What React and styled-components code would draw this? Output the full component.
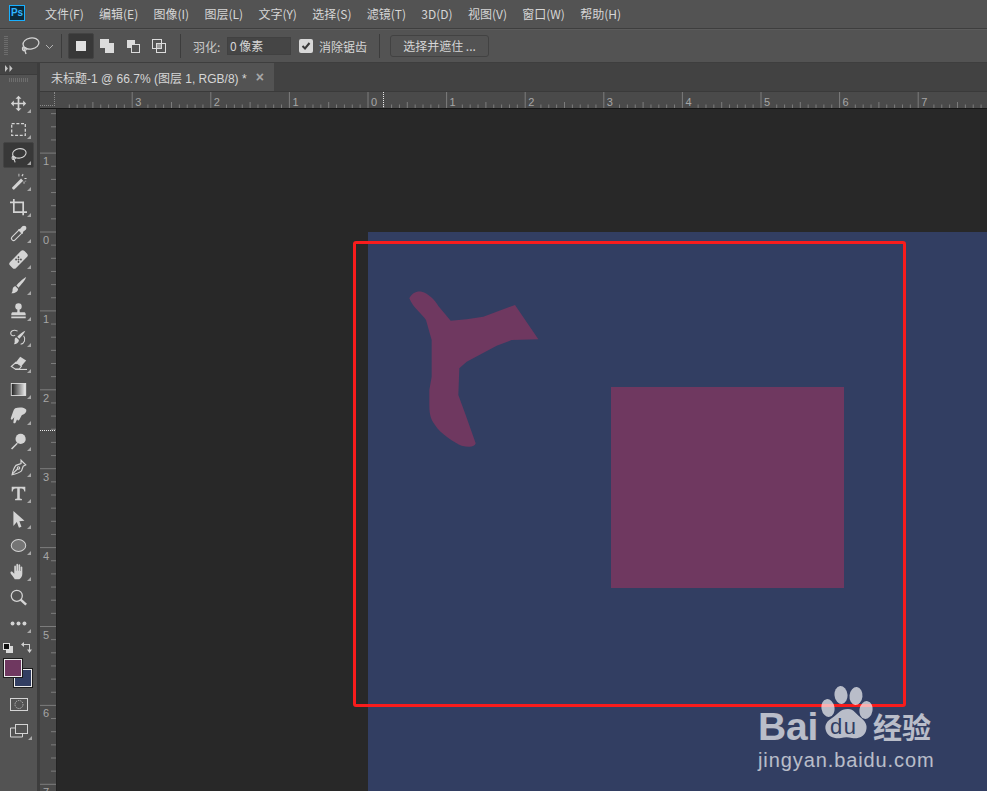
import React from 'react';
import styled, { createGlobalStyle } from 'styled-components';

//Menu and tool data
const MENUS = ['文件(F)', '编辑(E)', '图像(I)', '图层(L)', '文字(Y)', '选择(S)', '滤镜(T)', '3D(D)', '视图(V)', '窗口(W)', '帮助(H)'];
const H_ZERO = 312;
const H_STEP = 78.6;
const V_ZERO = 123;
const V_STEP = 78.9;
const range = (a, b) => Array.from({ length: b - a + 1 }, (_, i) => a + i);

const C = '#d4d4d4';

const ICONS = {
  move: <path fill={C} d="M10 1l3.500 3.500h-2.500v4.500h4.500V6.500L19 10l-3.500 3.500V11H11v4.500h2.500L10 19l-3.500-3.500H9V11H4.500v2.500L1 10l3.500-3.500V9H9V4.500H6.500z" />,
  marquee: <path fill="none" stroke={C} strokeWidth="1.500" strokeDasharray="3.500 2" d="M2 3h16v14H2z" />,
  lasso: (
    <g fill="none" stroke={C} strokeWidth="1.300">
      <ellipse cx="11" cy="7.500" rx="8" ry="5.500" transform="rotate(-10 11 7.500)" />
      <path d="M3.500 10.500c-2 2-1 5 1.500 4s1-3.500-1-2.500c0 2 1.500 3.500 2 6" />
    </g>
  ),
  wand: (
    <g fill={C}>
      <path d="M13 6.500l2.500 2.500L5 19.500c-1 .5-3-1.500-2.500-2.500z" />
      <path d="M10 1h1v3h-1zM15 1l1 1-1.500 2-1-1zM17 6h2.500v1H17zM16 10h1v2.500h-1zM18 9h1v1h-1z" />
    </g>
  ),
  crop: <path fill="none" stroke={C} strokeWidth="2" d="M0 4h15.500v15M4.500 0v15.500H20" />,
  dropper: (
    <g>
      <path fill="none" stroke={C} strokeWidth="1.300" d="M10.500 6l3.500 3.500-8 8c-1 1-2.500 1-3.500 0s-1-2.500 0-3.500z" />
      <path fill={C} d="M9.500 5l2.500-.5 2.500-3c1-1 3-1 4 0s1 3 0 4l-3 2.500-.5 2.500z" />
    </g>
  ),
  heal: (
    <g transform="rotate(-45 10 10)">
      <rect x="-2" y="5" width="24" height="10" rx="3" fill={C} />
      <g fill="#535353">
        <circle cx="8" cy="8" r="1.100" />
        <circle cx="12" cy="8" r="1.100" />
        <circle cx="8" cy="12" r="1.100" />
        <circle cx="12" cy="12" r="1.100" />
        <circle cx="10" cy="10" r="1.100" />
      </g>
    </g>
  ),
  brush: <path fill={C} d="M19 0c-1 4-6 9-9 12.500l-2.500-2.500C10 7 15 2 19 0zM6.500 11l3 3c0 3-4 5.500-8 5 1.500-1 1.500-2.500 1.500-4 0-2 1.500-4 3.500-4z" />,
  stamp: (
    <g fill={C}>
      <circle cx="10" cy="4" r="3.800" />
      <path d="M8.800 7h2.400l.3 4H17c1 0 1.500 1.500 1.500 3.500h-17c0-2 .5-3.500 1.500-3.500h5.500zM1.500 16h17v2h-17z" />
    </g>
  ),
  history: (
    <g>
      <path fill={C} d="M18 2c-1 3-5 7-7 9.500L8.500 9C11 6.500 15 3 18 2zM7.500 10l3 3c0 3-2.500 5-6 5 1-1 1-2.500 1-3.500 0-2.500 0-4.500 2-4.500z" />
      <path fill="none" stroke={C} strokeWidth="1.200" d="M9 2.500C4 0 0 2.500 1 6c.5 2 4 2.500 5 1M16 8c3 4 1 9-3.500 10" />
    </g>
  ),
  eraser: (
    <g>
      <path fill={C} d="M12 2l7 4.500-5.500 6.500-6.500-4.500z" />
      <path fill="none" stroke={C} strokeWidth="1.300" d="M7 8.500l6.500 4.500-2.500 3.500H6l-4.500-3z" />
      <path stroke={C} strokeWidth="1.300" d="M6 17h14" />
    </g>
  ),
  gradient: (
    <g>
      <defs>
        <linearGradient id="toolGrad">
          <stop offset="0" stopColor="#1c1c1c" />
          <stop offset="1" stopColor="#f0f0f0" />
        </linearGradient>
      </defs>
      <rect x="1.500" y="3" width="17" height="14" fill="url(#toolGrad)" stroke="#e6e6e6" />
    </g>
  ),
  smudge: <path fill={C} d="M6 1.500C10 0 17 0 19 3c1 3-2 6-5 6.500L11 15c-1 1.500-3 .5-2.500-1L6.500 18.500c-1 1.500-3 .5-2.500-1L5 12l-2 2.500c-1 1-2.500 0-2-1.500L3.500 6C4 4 5 2.500 6 1.500z" />,
  dodge: (
    <g fill={C}>
      <circle cx="12.500" cy="7" r="6" />
      <path d="M8 11.500l1.200 1.200-6.700 6.800-1.300-1.300z" />
    </g>
  ),
  pen: (
    <g fill="none" stroke={C} strokeWidth="1.400">
      <path d="M13 1.500l5.500 5.500-3 1.500-2 5.500c-3 2.500-6 3.500-11 4.500 1-5 2-8 4.500-11l6-2z" />
      <path d="M3 17.500l6-6" />
      <circle cx="10" cy="10.500" r="1.400" />
    </g>
  ),
  type: <path fill={C} d="M2 2h16v5.500h-1.200C16.500 5 15.500 4 13.500 4H11.500v12l2.500.5V18H6v-1.500l2.500-.5V4H6.500C4.500 4 3.500 5 3.200 7.500H2z" />,
  arrow: <path fill={C} d="M4 0l13 11.500-6 .5 2.500 6.500-3 1.300-2.500-6.800L4 17.500z" />,
  ellipse: <ellipse cx="10" cy="10" rx="8.500" ry="7" fill="#757575" stroke={C} strokeWidth="1.200" />,
  hand: <path fill={C} d="M5.500 19c-1-2.500-5-6-5-7.500s1.500-2 2.500-1l2 2V4c0-1.300 2-1.300 2 0v5h.500V2c0-1.300 2-1.300 2 0v7h.500V2.500c0-1.300 2-1.300 2 0V9.500h.500V5c0-1.300 2-1.300 2 0v7.500c0 3-1.500 5-3.500 6.500z" />,
  zoom: (
    <g fill="none" stroke={C}>
      <circle cx="8" cy="8" r="6.500" strokeWidth="1.500" />
      <path d="M12.500 12.500l6.500 6" strokeWidth="2.800" />
    </g>
  ),
  more: (
    <g fill={C}>
      <circle cx="3" cy="10" r="2.300" />
      <circle cx="10" cy="10" r="2.300" />
      <circle cx="17" cy="10" r="2.300" />
    </g>
  ),
};

const TOOLS = [
  { name: 'move', corner: true },
  { name: 'marquee', corner: true },
  { name: 'lasso', corner: true, active: true },
  { name: 'wand', corner: true },
  { name: 'crop', corner: true },
  { name: 'dropper', corner: true },
  { name: 'heal', corner: true },
  { name: 'brush', corner: true },
  { name: 'stamp', corner: true },
  { name: 'history', corner: true },
  { name: 'eraser', corner: true },
  { name: 'gradient', corner: true },
  { name: 'smudge', corner: true },
  { name: 'dodge', corner: true },
  { name: 'pen', corner: true },
  { name: 'type', corner: true },
  { name: 'arrow', corner: true },
  { name: 'ellipse', corner: true },
  { name: 'hand', corner: true },
  { name: 'zoom', corner: false },
  { name: 'more', corner: true },
];

//Rulers are drawings, ticks come from the scale
function HorizontalRuler() {
  return (
    <RulerSvg width="931" height="16">
      {range(-4, 7).map((n) => {
        const x = H_ZERO + n * H_STEP;
        return (
          <g key={n}>
            <line x1={x} x2={x} y1="0" y2="16" stroke="#7c7c7c" />
            {n > -4 && (
              <text x={x + 3} y="13.500" fontSize="11" fill="#a6a6a6" fontFamily="'Liberation Sans', sans-serif">
                {Math.abs(n)}
              </text>
            )}
            {range(2, 9).map((i) => (
              <line
                key={i}
                x1={x + (i * H_STEP) / 10}
                x2={x + (i * H_STEP) / 10}
                y1={i === 5 ? 10 : 12.500}
                y2="16"
                stroke="#7c7c7c"
              />
            ))}
          </g>
        );
      })}
      <line x1="327.500" x2="327.500" y1="0" y2="16" stroke="#e8e8e8" strokeDasharray="1 1" />
    </RulerSvg>
  );
}

function VerticalRuler() {
  return (
    <RulerSvg width="16" height="682">
      {range(-2, 7).map((n) => {
        const y = V_ZERO + n * V_STEP;
        return (
          <g key={n}>
            <line x1="0" x2="16" y1={y} y2={y} stroke="#7c7c7c" />
            {n > -2 && (
              <text x="3" y={y + 12} fontSize="11" fill="#a6a6a6" fontFamily="'Liberation Sans', sans-serif">
                {Math.abs(n)}
              </text>
            )}
            {range(1, 5).map((i) => (
              <line key={i} x1="11" x2="16" y1={y + (i * V_STEP) / 6} y2={y + (i * V_STEP) / 6} stroke="#7c7c7c" />
            ))}
          </g>
        );
      })}
      <line x1="0" x2="16" y1="321.500" y2="321.500" stroke="#e8e8e8" strokeDasharray="1 1" />
    </RulerSvg>
  );
}

function Paw() {
  return (
    <svg width="52" height="56" viewBox="0 0 52 56">
      <g fill="#fff">
        <ellipse cx="7" cy="22" rx="6.500" ry="9" transform="rotate(-10 7 22)" />
        <ellipse cx="20" cy="9" rx="6.500" ry="9" transform="rotate(-6 20 9)" />
        <ellipse cx="35" cy="10" rx="6.500" ry="9" transform="rotate(6 35 10)" />
        <ellipse cx="45" cy="24" rx="6.500" ry="9" transform="rotate(10 45 24)" />
        <path d="M27 23c6 0 8 5 12 8 5 4 8 8 6 14-2 6-8 8-14 7-4-1-7-1-11 0-6 1-13-1-15-7-2-6 1-10 6-13 6-4 8-9 16-9z" />
      </g>
    </svg>
  );
}

//Export default component
export default function App() {
  return (
    <>
      <GlobalStyle />
      <SDApp>
        <SDMenuBar>
          <SDPsLogo>Ps</SDPsLogo>
          {MENUS.map((m) => (
            <SDMenuItem key={m}>{m}</SDMenuItem>
          ))}
        </SDMenuBar>

        <SDOptionsBar>
          <SDGrip />
          <SDOptionLasso width="20" height="20" viewBox="0 0 20 20">
            {ICONS.lasso}
          </SDOptionLasso>
          <SDChevron width="9" height="6" viewBox="0 0 9 6">
            <path d="M1 1l3.500 3.500L8 1" fill="none" stroke="#b4b4b4" />
          </SDChevron>
          <SDDivider />
          <SDModeGroup>
            <SDModeButton $active>
              <svg width="10" height="10">
                <rect width="10" height="10" fill="#e0e0e0" />
              </svg>
            </SDModeButton>
            <SDModeButton>
              <svg width="14" height="14">
                <path d="M0 0h9v4h5v10H5v-5H0z" fill="#dcdcdc" />
              </svg>
            </SDModeButton>
            <SDModeButton>
              <svg width="13" height="13">
                <path d="M0 0h8v4H4v4H0z" fill="#dcdcdc" />
                <rect x="4.500" y="4.500" width="8" height="8" fill="none" stroke="#dcdcdc" />
              </svg>
            </SDModeButton>
            <SDModeButton>
              <svg width="14" height="14" fill="none" stroke="#dcdcdc">
                <rect x=".5" y=".5" width="9" height="9" />
                <rect x="4.500" y="4.500" width="9" height="9" />
                <rect x="5" y="5" width="4" height="4" fill="#9a9a9a" stroke="none" />
              </svg>
            </SDModeButton>
          </SDModeGroup>
          <SDDivider />
          <SDOptionLabel>羽化:</SDOptionLabel>
          <SDFeatherInput>0 像素</SDFeatherInput>
          <SDCheck>
            <svg width="10" height="10" viewBox="0 0 10 10">
              <path d="M1.500 5l2.500 2.500L8.500 2" fill="none" stroke="#3a3a3a" strokeWidth="2" />
            </svg>
          </SDCheck>
          <SDCheckLabel>消除锯齿</SDCheckLabel>
          <SDDivider />
          <SDMaskButton>选择并遮住 ...</SDMaskButton>
        </SDOptionsBar>

        <SDWorkspace>
          <SDToolPanel>
            <SDCollapse>
              <svg width="8" height="7" fill="#c4c4c4">
                <path d="M0 0l3 3.500L0 7zM4.500 0l3 3.500-3 3.500z" />
              </svg>
            </SDCollapse>
            <SDPanelGrip />
            <SDToolList>
              {TOOLS.map((t) => (
                <SDTool key={t.name} $active={t.active} $corner={t.corner}>
                  <svg width="20" height="20" viewBox="0 0 20 20">
                    {ICONS[t.name]}
                  </svg>
                </SDTool>
              ))}
            </SDToolList>
            <SDColors>
              <SDDefaults />
              <SDSwap width="11" height="11" viewBox="0 0 11 11">
                <path d="M0 2.500L3 0v2h6v5.500h2L8.500 11 6 7.500h2V3H3v2z" fill="#d0d0d0" />
              </SDSwap>
              <SDSwatch $color="#323e62" $back />
              <SDSwatch $color="#6f3860" />
            </SDColors>
            <SDModeIcon>
              <svg width="18" height="14" fill="none" stroke="#d4d4d4">
                <rect x=".5" y=".5" width="17" height="12" />
                <circle cx="9" cy="6.500" r="4" strokeDasharray="1 1.200" />
              </svg>
            </SDModeIcon>
            <SDModeIcon $corner>
              <svg width="18" height="14" fill="none" stroke="#d4d4d4">
                <rect x="5.500" y=".5" width="12" height="9" />
                <path d="M5 4H.5v9h12V10" />
              </svg>
            </SDModeIcon>
          </SDToolPanel>

          <SDPanelEdge />

          <SDDocArea>
            <SDTabBar>
              <SDTab>
                未标题-1 @ 66.7% (图层 1, RGB/8) *
                <SDTabClose>×</SDTabClose>
              </SDTab>
            </SDTabBar>
            <SDTopRuler>
              <SDRulerCorner />
              <HorizontalRuler />
            </SDTopRuler>
            <SDBody>
              <SDSideRuler>
                <VerticalRuler />
              </SDSideRuler>
              <SDCanvas>
                <SDDocument />
                <SDShapeRect />
                <SDBlob width="150" height="175" viewBox="0 0 450 525">
                  <path
                    fill="#6f3860"
                    d="M28 55C35 40 50 32 65 35C85 40 105 60 115 78L152 122L200 118L250 110L290 95L345 75L415 178L335 180L290 197L200 245L178 265L175 345L197 405L227 490C225 502 205 502 185 497C165 490 120 460 105 435C90 415 88 400 88 370L88 330L95 290L95 180L78 120C65 100 40 85 28 55Z"
                  />
                </SDBlob>
                <SDRedFrame />
                <SDWatermark>
                  <SDMarkTop>
                    <SDBai>Bai</SDBai>
                    <SDPawBox>
                      <Paw />
                      <SDDu>du</SDDu>
                    </SDPawBox>
                    <SDJingyan>经验</SDJingyan>
                  </SDMarkTop>
                  <SDMarkUrl>jingyan.baidu.com</SDMarkUrl>
                </SDWatermark>
              </SDCanvas>
            </SDBody>
          </SDDocArea>
        </SDWorkspace>
      </SDApp>
    </>
  );
}

//Styled components
const GlobalStyle = createGlobalStyle`
  html, body {
    margin: 0;
    padding: 0;
    background: #282828;
  }
`;

const SDApp = styled.div`
  display: flex;
  flex-direction: column;
  width: 987px;
  height: 791px;
  overflow: hidden;
  background: #535353;
  font-family: 'Liberation Sans', 'Noto Sans CJK SC', sans-serif;
  font-size: 12px;
  color: #d6d6d6;
`;

const SDMenuBar = styled.div`
  box-sizing: border-box;
  display: flex;
  align-items: center;
  gap: 15.3px;
  flex: 0 0 29px;
  padding: 0 0 2px 9px;
  border-bottom: 1px solid #3e3e3e;
`;

const SDPsLogo = styled.div`
  box-sizing: border-box;
  width: 16px;
  height: 16px;
  margin-right: 4.7px;
  border: 1px solid #19b0ff;
  background: #0c2a3c;
  color: #31b4ff;
  font-size: 10px;
  font-weight: bold;
  line-height: 14px;
  text-align: center;
`;

const SDMenuItem = styled.div`
  font-family: 'Noto Sans CJK SC', sans-serif;
  white-space: nowrap;
`;

const SDOptionsBar = styled.div`
  box-sizing: border-box;
  display: flex;
  align-items: center;
  flex: 0 0 34px;
  padding-left: 4px;
  border-top: 1px solid #5c5c5c;
  border-bottom: 1px solid #3e3e3e;
`;

const SDGrip = styled.div`
  width: 4px;
  height: 20px;
  background: repeating-linear-gradient(to bottom, #6c6c6c 0 1px, transparent 1px 2px);
`;

const SDOptionLasso = styled.svg`
  margin-left: 12px;
`;

const SDChevron = styled.svg`
  margin: 2px 0 0 5px;
`;

const SDDivider = styled.div`
  width: 1px;
  height: 24px;
  margin: 0 6px 0 7px;
  background: #3c3c3c;
`;

const SDModeGroup = styled.div`
  display: flex;
  margin-right: 1px;
`;

const SDModeButton = styled.div`
  box-sizing: border-box;
  display: flex;
  align-items: center;
  justify-content: center;
  width: 26px;
  height: 26px;
  border-radius: 2px;
  background: ${(p) => (p.$active ? '#383838' : 'transparent')};
  border: 1px solid ${(p) => (p.$active ? '#434343' : 'transparent')};
`;

const SDOptionLabel = styled.div`
  margin-left: 6px;
  width: 34px;
  color: #c8c8c8;
  font-family: 'Noto Sans CJK SC', sans-serif;
`;

const SDFeatherInput = styled.div`
  box-sizing: border-box;
  width: 64px;
  height: 18px;
  padding-left: 2px;
  background: #454545;
  border: 1px solid #414141;
  line-height: 16px;
  font-family: 'Noto Sans CJK SC', sans-serif;
`;

const SDCheck = styled.div`
  display: flex;
  align-items: center;
  justify-content: center;
  width: 14px;
  height: 14px;
  margin-left: 8px;
  border-radius: 2px;
  background: #d8d8d8;
`;

const SDCheckLabel = styled.div`
  margin: 0 5px 0 6px;
  width: 48px;
  font-family: 'Noto Sans CJK SC', sans-serif;
`;

const SDMaskButton = styled.div`
  box-sizing: border-box;
  width: 99px;
  height: 22px;
  margin-left: 4px;
  border: 1px solid #424242;
  border-radius: 3px;
  background: #535353;
  line-height: 20px;
  text-align: center;
  font-family: 'Noto Sans CJK SC', sans-serif;
`;

const SDWorkspace = styled.div`
  display: flex;
  flex: 1;
  min-height: 0;
`;

const SDToolPanel = styled.div`
  display: flex;
  flex-direction: column;
  align-items: center;
  flex: 0 0 37px;
`;

const SDPanelEdge = styled.div`
  flex: 0 0 3px;
  background: #3d3d3d;
`;

const SDCollapse = styled.div`
  box-sizing: border-box;
  display: flex;
  align-items: center;
  align-self: stretch;
  flex: 0 0 12px;
  padding-left: 5px;
  background: #444444;
  border-bottom: 1px solid #3c3c3c;
`;

const SDPanelGrip = styled.div`
  width: 19px;
  height: 4px;
  margin: 3px 0 8px;
  background: repeating-linear-gradient(to right, #6e6e6e 0 1px, transparent 1px 2px);
`;

const SDToolList = styled.div`
  display: flex;
  flex-direction: column;
  align-items: center;
`;

const SDTool = styled.div`
  box-sizing: border-box;
  position: relative;
  display: flex;
  align-items: center;
  justify-content: center;
  width: 31px;
  height: 26px;
  border-radius: 2px;
  background: ${(p) => (p.$active ? '#383838' : 'transparent')};
  border: 1px solid ${(p) => (p.$active ? '#444444' : 'transparent')};
  svg {
    width: 17px;
    height: 17px;
    overflow: visible;
  }
  ${(p) =>
    p.$corner &&
    `&::after {
      content: '';
      position: absolute;
      right: 2px;
      bottom: 2px;
      width: 4px;
      height: 4px;
      background: #a8a8a8;
      clip-path: polygon(100% 0, 100% 100%, 0 100%);
    }`}
`;

const SDColors = styled.div`
  position: relative;
  align-self: stretch;
  height: 50px;
  margin-top: 6px;
`;

const SDDefaults = styled.div`
  box-sizing: border-box;
  position: absolute;
  left: 3px;
  top: 1px;
  width: 7px;
  height: 7px;
  background: #111;
  border: 1px solid #e0e0e0;
  box-shadow: 3px 3px 0 0 #d8d8d8;
`;

const SDSwap = styled.svg`
  position: absolute;
  left: 21px;
  top: 0;
`;

const SDSwatch = styled.div`
  box-sizing: border-box;
  position: absolute;
  left: ${(p) => (p.$back ? '13px' : '3px')};
  top: ${(p) => (p.$back ? '26px' : '16px')};
  width: 20px;
  height: 20px;
  background: ${(p) => p.$color};
  border: 1px solid #1c1c1c;
  box-shadow: inset 0 0 0 1px #ececec;
`;

const SDModeIcon = styled.div`
  position: relative;
  display: flex;
  align-items: center;
  justify-content: center;
  align-self: stretch;
  height: 26px;
  ${(p) =>
    p.$corner &&
    `&::after {
      content: '';
      position: absolute;
      right: 5px;
      bottom: 4px;
      width: 4px;
      height: 4px;
      background: #a8a8a8;
      clip-path: polygon(100% 0, 100% 100%, 0 100%);
    }`}
`;

const SDDocArea = styled.div`
  display: flex;
  flex-direction: column;
  flex: 1;
  min-width: 0;
`;

const SDTabBar = styled.div`
  display: flex;
  flex: 0 0 29px;
  background: #424242;
  border-bottom: 1px solid #3a3a3a;
  box-sizing: border-box;
`;

const SDTab = styled.div`
  display: flex;
  align-items: center;
  justify-content: space-between;
  box-sizing: border-box;
  width: 234px;
  padding: 0 10px 0 11px;
  background: #535353;
  font-family: 'Liberation Sans', 'Noto Sans CJK SC', sans-serif;
  white-space: nowrap;
`;

const SDTabClose = styled.span`
  font-size: 14px;
  font-weight: bold;
  color: #a8a8a8;
`;

const SDTopRuler = styled.div`
  display: flex;
  flex: 0 0 16px;
  background: #4a4a4a;
  border-bottom: 1px solid #161616;
`;

const SDRulerCorner = styled.div`
  box-sizing: border-box;
  flex: 0 0 15px;
  height: 14px;
  margin-right: 1px;
  border-right: 1px dotted #8a8a8a;
  border-bottom: 1px dotted #8a8a8a;
`;

const RulerSvg = styled.svg`
  display: block;
  flex: none;
`;

const SDBody = styled.div`
  display: flex;
  flex: 1;
  min-height: 0;
`;

const SDSideRuler = styled.div`
  flex: 0 0 16px;
  overflow: hidden;
  background: #4a4a4a;
  border-right: 1px solid #222;
`;

const SDCanvas = styled.div`
  position: relative;
  flex: 1;
  overflow: hidden;
  background: #282828;
`;

const SDDocument = styled.div`
  position: absolute;
  left: 311px;
  top: 123px;
  right: 0;
  bottom: 0;
  background: #323e62;
`;

const SDShapeRect = styled.div`
  position: absolute;
  left: 554px;
  top: 278px;
  width: 233px;
  height: 201px;
  background: #6f3860;
`;

const SDBlob = styled.svg`
  position: absolute;
  left: 343px;
  top: 171px;
`;

const SDRedFrame = styled.div`
  box-sizing: border-box;
  position: absolute;
  left: 296px;
  top: 132px;
  width: 553px;
  height: 466px;
  border: 3px solid #f81c1c;
  border-radius: 3px;
`;

const SDWatermark = styled.div`
  position: absolute;
  left: 701px;
  top: 578px;
  width: 190px;
  color: #fff;
  opacity: 0.66;
`;

const SDMarkTop = styled.div`
  display: flex;
  align-items: flex-end;
  height: 54px;
`;

const SDBai = styled.div`
  font-family: 'Liberation Sans', sans-serif;
  font-size: 39px;
  font-weight: bold;
  line-height: 29px;
  letter-spacing: -0.2px;
  margin-bottom: 0;
`;

const SDPawBox = styled.div`
  position: relative;
  width: 52px;
  height: 56px;
  margin: 0 0 -1px 3px;
`;

const SDDu = styled.div`
  position: absolute;
  left: 9px;
  top: 29px;
  font-family: 'Liberation Sans', sans-serif;
  font-size: 22px;
  letter-spacing: 1.5px;
  line-height: 24px;
  color: #323e62;
`;

const SDJingyan = styled.div`
  font-family: 'Noto Sans CJK SC', sans-serif;
  font-size: 29px;
  font-weight: bold;
  line-height: 30px;
`;

const SDMarkUrl = styled.div`
  margin-top: 8px;
  font-family: 'Liberation Sans', sans-serif;
  font-size: 20px;
  line-height: 22px;
  letter-spacing: 0.9px;
  white-space: nowrap;
`;
